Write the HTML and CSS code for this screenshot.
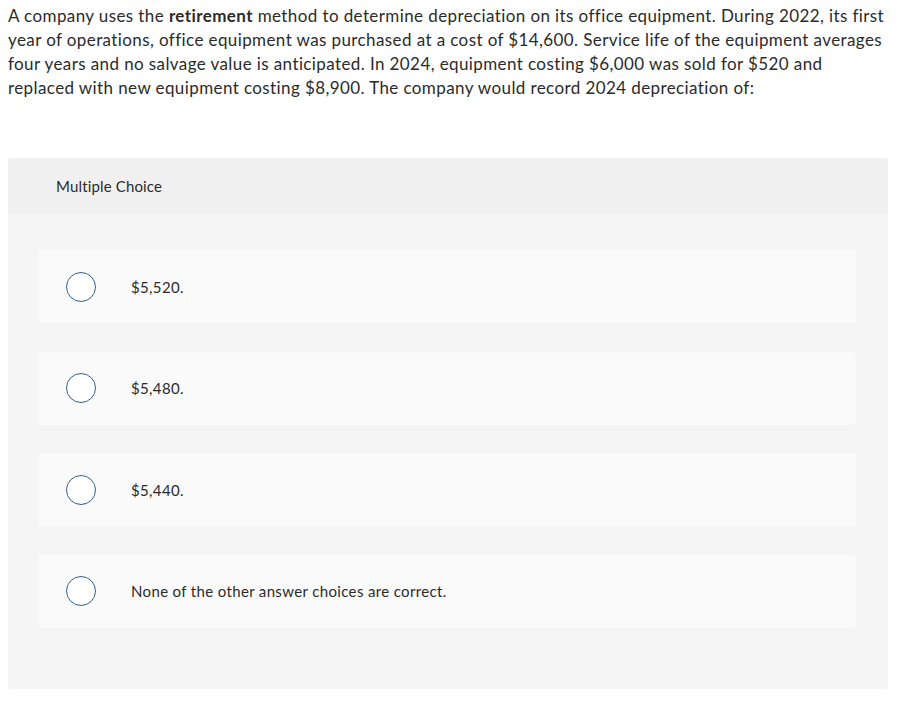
FILE: index.html
```html
<!DOCTYPE html>
<html>
<head>
<meta charset="utf-8">
<link rel="stylesheet" href="styles.css">
</head>
<body>
<p class="question">A company uses the <strong>retirement</strong> method to determine depreciation on its office equipment. During 2022, its first year of operations, office equipment was purchased at a cost of $14,600. Service life of the equipment averages four years and no salvage value is anticipated. In 2024, equipment costing $6,000 was sold for $520 and replaced with new equipment costing $8,900. The company would record 2024 depreciation of:</p>
<div class="panel">
  <div class="panel-head">Multiple Choice</div>
  <div class="panel-body">
    <div class="option"><span class="radio"></span><span class="label">$5,520.</span></div>
    <div class="option"><span class="radio"></span><span class="label">$5,480.</span></div>
    <div class="option"><span class="radio"></span><span class="label">$5,440.</span></div>
    <div class="option"><span class="radio"></span><span class="label">None of the other answer choices are correct.</span></div>
  </div>
</div>
</body>
</html>
```
FILE: styles.css
```css
html, body { background: #fff; }
body {
  margin: 0;
  padding: 4px 34px 0 8px;
  font-family: "Lato", "Liberation Sans", sans-serif;
  color: #2b2b2b;
}
.question {
  margin: 0;
  font-size: 17px;
  line-height: 24px;
  letter-spacing: 0.4px;
}
.question strong { font-weight: 700; }
.panel {
  margin-top: 58px;
  width: 880px;
  background: #f5f5f5;
  border-radius: 3px;
  overflow: hidden;
}
.panel-head {
  background: #f0f0f0;
  height: 56px;
  display: flex;
  align-items: center;
  padding-left: 48px;
  font-size: 15px;
  letter-spacing: 0.15px;
}
.panel-body {
  padding: 36px 32px 61px 30px;
  display: flex;
  flex-direction: column;
  gap: 28.5px;
}
.option {
  background: #fafafa;
  border-radius: 4px;
  height: 73px;
  display: flex;
  align-items: center;
  padding-left: 28px;
  font-size: 15px;
  letter-spacing: 0.35px;
}
.radio {
  width: 28px;
  height: 28px;
  border: 1.5px solid #2f5f92;
  border-radius: 50%;
  background: #fff;
  flex: none;
}
.label { margin-left: 35px; }
```
